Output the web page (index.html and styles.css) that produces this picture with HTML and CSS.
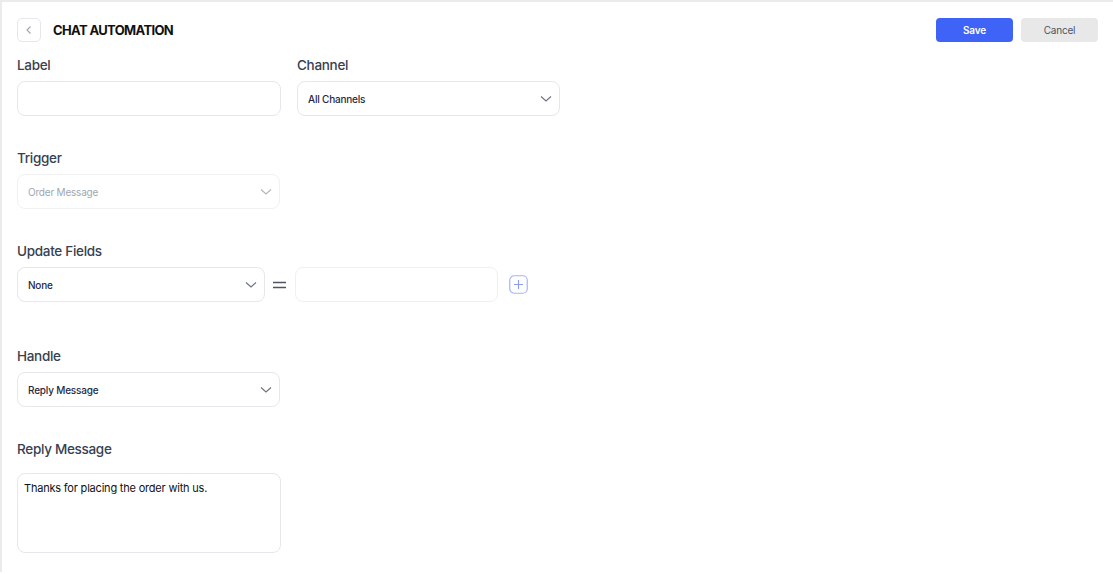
FILE: index.html
```html
<html>
<head>
<link rel="stylesheet" href="styles.css">
</head>
<body>

<div class="page">

  <div class="header">
    <div class="headerLeft">
      <button class="backBtn">
        <svg width="10" height="10" viewBox="0 0 10 10"><path d="M6.5 1.5 L3 5 L6.5 8.5" fill="none" stroke="#9ca3af" stroke-width="1.1"/></svg>
      </button>
      <div class="title">CHAT AUTOMATION</div>
    </div>
    <div class="headerActions">
      <button class="btn btnSave">Save</button>
      <button class="btn btnCancel">Cancel</button>
    </div>
  </div>

  <div class="row">
    <div class="field">
      <div class="fieldLabel">Label</div>
      <div class="input wide"></div>
    </div>
    <div class="field">
      <div class="fieldLabel">Channel</div>
      <div class="select channel">
        <span>All Channels</span>
        <svg class="chev" width="12" height="8" viewBox="0 0 12 8"><path d="M1 1.5 L6 6 L11 1.5" fill="none" stroke="#6b7280" stroke-width="1.1"/></svg>
      </div>
    </div>
  </div>

  <div class="field section">
    <div class="fieldLabel">Trigger</div>
    <div class="select disabled">
      <span>Order Message</span>
      <svg class="chev" width="12" height="8" viewBox="0 0 12 8"><path d="M1 1.5 L6 6 L11 1.5" fill="none" stroke="#b0b5bd" stroke-width="1.1"/></svg>
    </div>
  </div>

  <div class="field section updateSection">
    <div class="fieldLabel">Update Fields</div>
    <div class="updateRow">
      <div class="select none">
        <span>None</span>
        <svg class="chev" width="12" height="8" viewBox="0 0 12 8"><path d="M1 1.5 L6 6 L11 1.5" fill="none" stroke="#6b7280" stroke-width="1.1"/></svg>
      </div>
      <svg class="equals" width="13" height="8" viewBox="0 0 13 8"><path d="M0 1.5 H13 M0 6.5 H13" stroke="#4b5563" stroke-width="1.3"/></svg>
      <div class="input valueInput"></div>
      <svg class="plus" width="19" height="19" viewBox="0 0 19 19">
        <rect x="0.75" y="0.75" width="17.5" height="17.5" rx="4.5" fill="none" stroke="#a5b4fc" stroke-width="1.2"/>
        <path d="M9.5 5 V14 M5 9.5 H14" stroke="#8b9cf8" stroke-width="1.1"/>
      </svg>
    </div>
  </div>

  <div class="field section">
    <div class="fieldLabel">Handle</div>
    <div class="select">
      <span>Reply Message</span>
      <svg class="chev" width="12" height="8" viewBox="0 0 12 8"><path d="M1 1.5 L6 6 L11 1.5" fill="none" stroke="#6b7280" stroke-width="1.1"/></svg>
    </div>
  </div>

  <div class="field section">
    <div class="fieldLabel replyLabel">Reply Message</div>
    <div class="textarea">Thanks for placing the order with us.</div>
  </div>

</div>

</body>
</html>
```

FILE: styles.css
```css
body {
  margin: 0;
  font-family: Inter, "Liberation Sans", sans-serif;
  background: #ffffff;
}

.page {
  border-top: 2px solid #ebebeb;
  border-left: 2px solid #ebebeb;
  min-height: 572px;
  padding: 16px 15px 0 15px;
  box-sizing: border-box;
}

.header {
  display: flex;
  justify-content: space-between;
  align-items: center;
  height: 24px;
}

.headerLeft {
  display: flex;
  align-items: center;
  gap: 12px;
}

.backBtn {
  width: 24px;
  height: 24px;
  border: 1px solid #e5e7eb;
  border-radius: 5px;
  background: #fff;
  padding: 0;
  display: flex;
  align-items: center;
  justify-content: center;
}

.title {
  font-size: 13px;
  font-weight: 700;
  color: #111;
  letter-spacing: -0.65px;
}

.headerActions {
  display: flex;
  gap: 8px;
}

.btn {
  width: 77px;
  height: 24px;
  border: none;
  border-radius: 4px;
  font-family: Inter, "Liberation Sans", sans-serif;
  font-size: 10px;
  letter-spacing: -0.2px;
}

.btnSave {
  background: #3f63f6;
  color: #fff;
  font-weight: 600;
}

.btnCancel {
  background: #e8e8e8;
  color: #4b5563;
}

.row {
  display: flex;
  gap: 16px;
  margin-top: 14px;
}

.field {
  display: flex;
  flex-direction: column;
}

.fieldLabel {
  font-size: 13.5px;
  font-weight: 500;
  color: #374151;
  letter-spacing: -0.3px;
  line-height: 18px;
  margin-bottom: 7px;
}

.section {
  margin-top: 33px;
}

.updateSection {
  padding-bottom: 12px;
}

.input {
  height: 35px;
  border: 1px solid #e5e7eb;
  border-radius: 8px;
  box-sizing: border-box;
}

.wide {
  width: 264px;
}

.select {
  width: 263px;
  height: 35px;
  border: 1px solid #e5e7eb;
  border-radius: 8px;
  box-sizing: border-box;
  display: flex;
  align-items: center;
  justify-content: space-between;
  padding: 0 7px 0 10px;
  font-size: 10px;
  font-weight: 500;
  color: #1f2a44;
  letter-spacing: -0.2px;
}

.select.channel {
  width: 263px;
}

.select.disabled {
  border-color: #f0f1f3;
  color: #a0a6b1;
  font-weight: 400;
}

.updateRow {
  display: flex;
  align-items: center;
}

.select.none {
  width: 248px;
}

.equals {
  margin: 0 9px 0 8px;
}

.valueInput {
  width: 203px;
  border-color: #eef0f2;
}

.plus {
  margin-left: 11px;
}

.replyLabel {
  margin-bottom: 15px;
}

.textarea {
  width: 264px;
  height: 80px;
  border: 1px solid #e5e7eb;
  border-radius: 8px;
  box-sizing: border-box;
  padding: 7px 6px;
  font-size: 11px;
  color: #111;
  letter-spacing: -0.2px;
}
```
